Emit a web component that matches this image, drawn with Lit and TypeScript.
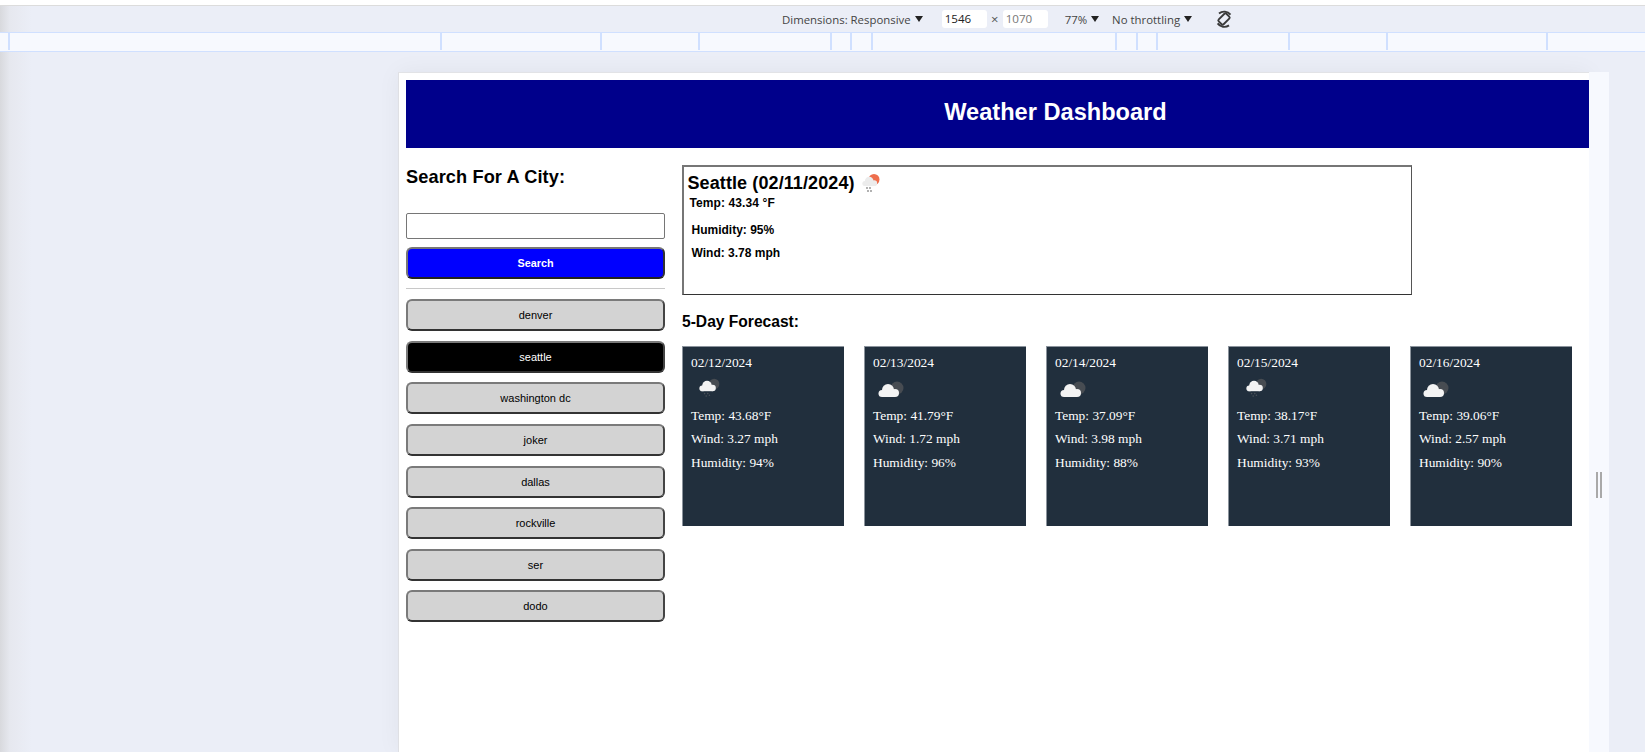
import { LitElement, html, css, svg } from "lit";
import { customElement } from "lit/decorators.js";

const TICKS = [9, 441, 601, 699, 831, 851, 872, 1116, 1137, 1157, 1289, 1387, 1547];
const CITIES = ["denver", "seattle", "washington dc", "joker", "dallas", "rockville", "ser", "dodo"];
const FORECAST = [
  { date: "02/12/2024", temp: "43.68", wind: "3.27", hum: "94", rain: true, x: 16 },
  { date: "02/13/2024", temp: "41.79", wind: "1.72", hum: "96", rain: false, x: 13 },
  { date: "02/14/2024", temp: "37.09", wind: "3.98", hum: "88", rain: false, x: 13 },
  { date: "02/15/2024", temp: "38.17", wind: "3.71", hum: "93", rain: true, x: 17 },
  { date: "02/16/2024", temp: "39.06", wind: "2.57", hum: "90", rain: false, x: 12 },
];

const cloudShape = svg`<circle cx="10" cy="7" r="6"/><circle cx="4" cy="10.5" r="3.5"/><circle cx="17" cy="10" r="4"/><rect x="4" y="9" width="13" height="5"/>`;

function cardIcon(rain: boolean, offset: number) {
  const scale = rain ? 0.8 : 1;
  return html`<svg class="ficon" style="margin-left:${offset - 8}px" width="30" height="28" viewBox="0 0 30 28">
    <g transform="translate(0 ${rain ? 7 : 10}) scale(${scale})">
      <circle cx="19" cy="5" r="6.5" fill="#474c52"/>
      <g fill="#f3f3f3">${cloudShape}</g>
      ${rain ? svg`<g fill="#4a5158"><circle cx="7" cy="17" r="1"/><circle cx="11" cy="17" r="1"/><circle cx="9" cy="20" r="1"/><circle cx="13" cy="19" r="1"/></g>` : ""}
    </g>
  </svg>`;
}

@customElement("app-root")
export class AppRoot extends LitElement {
  static styles = css`
    :host {
      display: block;
      width: 1645px;
      height: 752px;
      overflow: hidden;
      background: linear-gradient(90deg, #d8d9dd 0, #e6e8ef 10px, #ebeef7 32px);
      font-family: "Liberation Sans", Arial, sans-serif;
      color: #000;
    }
    .top { height: 5px; background: #fff; border-bottom: 1px solid #dcdcdc; }
    .toolbar {
      height: 26px;
      display: flex;
      align-items: center;
      font-family: "Open Sans", sans-serif;
      font-size: 11.4px;
      color: #444;
      padding-left: 782px;
    }
    .tri {
      width: 0;
      height: 0;
      border-left: 4px solid transparent;
      border-right: 4px solid transparent;
      border-top: 6px solid #222;
      margin-left: 4px;
      margin-top: 0;
    }
    .dim {
      width: 45px;
      height: 18px;
      background: #fff;
      border-radius: 3px;
      box-sizing: border-box;
      padding-left: 3px;
      line-height: 18px;
      color: #222;
      font-size: 11.6px;
    }
    .dim.off { color: #777; }
    .times { width: 16px; text-align: center; color: #555; font-size: 13px; }
    .m-dim { margin-left: 19px; }
    .m-zoom { margin-left: 17px; }
    .m-throt { margin-left: 13px; }
    .m-rot { margin-left: 23px; }
    .ruler {
      height: 20px;
      box-sizing: border-box;
      background: #f7f9fe;
      border-top: 1px solid #d0e0ff;
      border-bottom: 1px solid #d0e0ff;
      display: flex;
    }
    .seg {
      box-sizing: border-box;
      height: 17px;
      border-right: 2px solid #d0e0ff;
      flex: none;
    }
    .stage { display: flex; padding: 20px 0 0 398px; height: 700px; box-sizing: border-box; }
    .panel {
      width: 1191px;
      height: 680px;
      box-sizing: border-box;
      background: #fff;
      border-left: 1px solid #dfe0e4;
      border-top: 1px solid #e2e3e6;
      padding: 7px 0 0 7px;
      box-shadow: 0 0 22px rgba(0, 0, 0, 0.05);
    }
    .strip {
      width: 20px;
      background: #f7f9fe;
      display: flex;
      gap: 2px;
      justify-content: center;
      padding-top: 400px;
      box-sizing: border-box;
    }
    .grip { width: 2px; height: 26px; background: #a9a9a9; }
    header {
      height: 68px;
      background: #00008b;
      color: #fff;
      display: flex;
      align-items: center;
      justify-content: center;
      padding: 0 0 3px 116px;
      box-sizing: border-box;
      font-size: 23.6px;
      font-weight: 700;
    }
    .content { display: flex; }
    .side { width: 259px; flex: none; }
    h2 {
      margin: 19px 0 0;
      font-size: 18.2px;
      line-height: 20px;
      font-weight: 700;
      letter-spacing: 0.1px;
    }
    .search {
      display: block;
      width: 259px;
      height: 26px;
      box-sizing: border-box;
      border: 1px solid #767676;
      border-radius: 2px;
      margin-top: 26px;
      background: #fff;
      padding: 0;
    }
    button {
      display: block;
      width: 259px;
      height: 32px;
      box-sizing: border-box;
      border-style: solid;
      border-width: 2px;
      border-color: #7a7a7a #444 #333 #7a7a7a;
      border-radius: 6px;
      font-family: "Liberation Sans", Arial, sans-serif;
      font-size: 11px;
      padding: 0;
      color: #000;
      background: #d3d3d3;
    }
    button.go { background: #00f; color: #fff; font-weight: 700; font-size: 10.8px; margin-top: 8px; border-color: #777 #333 #222 #777; }
    button.sel { background: #000; color: #fff; }
    .rule { height: 1px; background: #c8c8c8; border: 0; margin: 9px 0 10.3px; }
    .cities { display: flex; flex-direction: column; gap: 9.6px; }
    .main { margin-left: 17px; flex: 1; }
    .current {
      margin-top: 17px;
      width: 730px;
      height: 130px;
      box-sizing: border-box;
      border-style: solid;
      border-width: 2px 1px 1px 2px;
      border-color: #767676 #555 #333 #767676;
      padding: 6px 0 0 3.5px;
      font-weight: 700;
      font-size: 12px;
    }
    .title { display: flex; align-items: center; font-size: 18px; line-height: 21px; letter-spacing: 0.1px; }
    .title svg { margin-left: 6px; }
    .temp { margin: 2px 0 0 2px; line-height: 15px; letter-spacing: 0.1px; }
    .hum { margin: 12px 0 0 4px; line-height: 15px; }
    .wind { margin: 8px 0 0 4px; line-height: 15px; }
    .five { margin: 18px 0 0; font-size: 15.6px; line-height: 18px; font-weight: 700; }
    .cards { display: flex; gap: 20px; margin-top: 15px; }
    .card {
      width: 162px;
      height: 180px;
      box-sizing: border-box;
      background: #212f3d;
      border-top: 1px solid #8b939c;
      border-left: 1px solid #8b939c;
      padding: 6px 0 0 8px;
      color: #fff;
      font-family: "Liberation Serif", "Times New Roman", serif;
      font-size: 13.4px;
    }
    .line { line-height: 20px; height: 20px; }
    .ficon { display: block; margin-top: 0; height: 28px; margin-bottom: 5px; }
    .gap { margin-top: 3px; }
    .gap.last { margin-top: 4px; }
  `;

  render() {
    let prev = 0;
    return html`
      <div class="top"></div>
      <div class="toolbar">
        <span>Dimensions: Responsive</span><i class="tri"></i>
        <span class="dim m-dim">1546</span><span class="times">×</span><span class="dim off">1070</span>
        <span class="m-zoom">77%</span><i class="tri"></i>
        <span class="m-throt">No throttling</span><i class="tri"></i>
        <svg class="m-rot" width="18" height="18" viewBox="0 0 18 18" fill="none" stroke="#3a3a3a" stroke-width="1.9">
          <rect x="5.6" y="3.6" width="6.8" height="10.8" rx="1.4" transform="rotate(45 9 9)"/>
          <path d="M4 3.4 A8.2 8.2 0 0 1 15.5 4.6"/>
          <path d="M2.6 13.4 A8.2 8.2 0 0 0 14 15.4"/>
        </svg>
      </div>
      <div class="ruler">
        ${TICKS.map((t) => {
          const w = t + 1 - prev;
          prev = t + 1;
          return html`<div class="seg" style="width:${w}px"></div>`;
        })}
      </div>
      <div class="stage">
        <div class="panel">
          <header>Weather Dashboard</header>
          <div class="content">
            <div class="side">
              <h2>Search For A City:</h2>
              <input class="search" type="text" />
              <button class="go">Search</button>
              <hr class="rule" />
              <div class="cities">
                ${CITIES.map((c) => html`<button class=${c === "seattle" ? "sel" : ""}>${c}</button>`)}
              </div>
            </div>
            <div class="main">
              <div class="current">
                <div class="title">
                  <span>Seattle (02/11/2024)</span>
                  <svg width="20" height="21" viewBox="0 0 20 21">
                    <circle cx="13" cy="6.5" r="5.5" fill="#ee6e4d"/>
                    <g fill="#ececec" transform="translate(1 3) scale(0.72)">${cloudShape}</g>
                    <g fill="#8d8d8d"><circle cx="6" cy="15" r="0.9"/><circle cx="9" cy="15" r="0.9"/><circle cx="7" cy="18" r="0.9"/><circle cx="10" cy="18" r="0.9"/></g>
                  </svg>
                </div>
                <div class="temp">Temp: 43.34 °F</div>
                <div class="hum">Humidity: 95%</div>
                <div class="wind">Wind: 3.78 mph</div>
              </div>
              <div class="five">5-Day Forecast:</div>
              <div class="cards">
                ${FORECAST.map(
                  (f) => html`<div class="card">
                    <div class="line">${f.date}</div>
                    ${cardIcon(f.rain, f.x)}
                    <div class="line">Temp: ${f.temp}°F</div>
                    <div class="line gap">Wind: ${f.wind} mph</div>
                    <div class="line gap last">Humidity: ${f.hum}%</div>
                  </div>`
                )}
              </div>
            </div>
          </div>
        </div>
        <div class="strip"><i class="grip"></i><i class="grip"></i></div>
      </div>
    `;
  }
}
